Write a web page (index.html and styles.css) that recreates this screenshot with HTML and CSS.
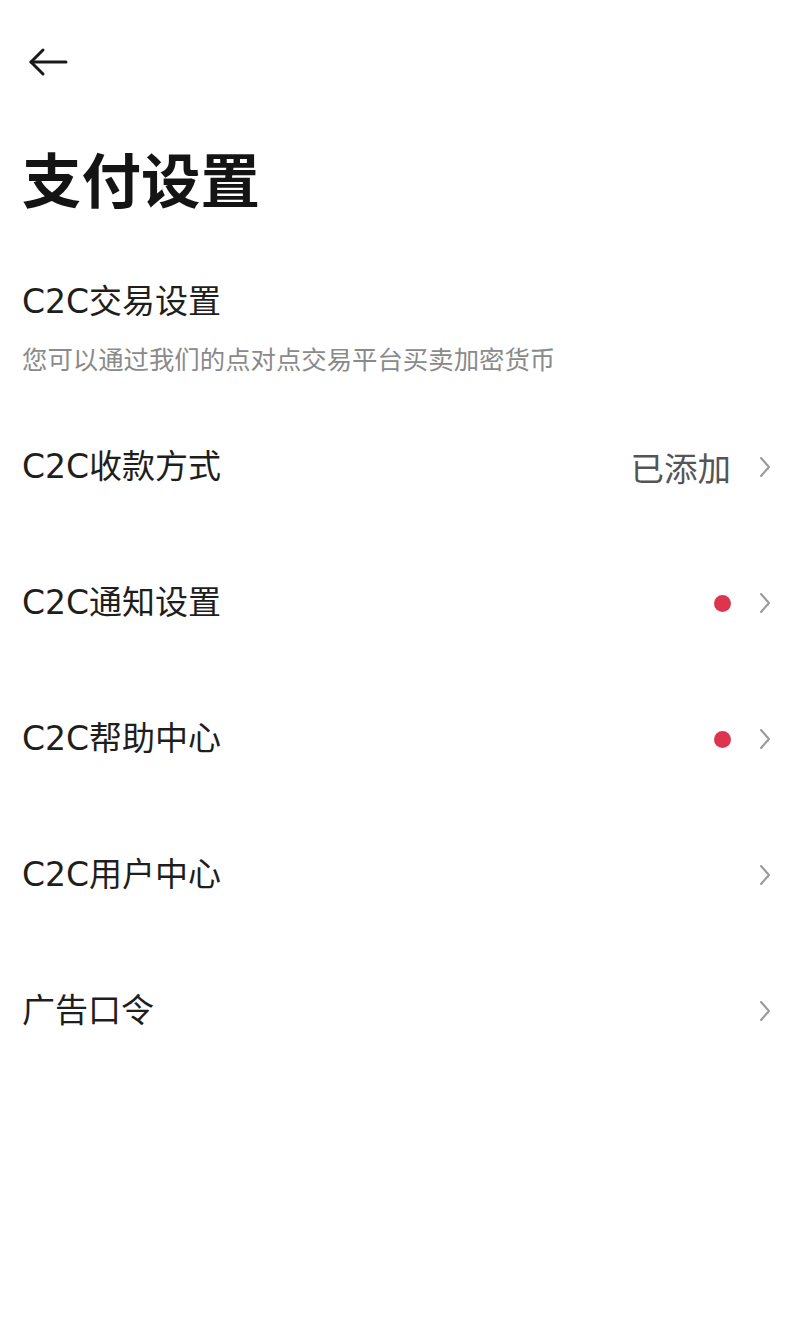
FILE: index.html
```html
<!DOCTYPE html>
<html lang="zh-CN">
<head>
<meta charset="utf-8">
<title>支付设置</title>
<link rel="stylesheet" href="styles.css">
</head>
<body>
<div class="page">
  <header class="topbar">
    <svg class="back" width="40" height="30" viewBox="0 0 40 30" fill="none" stroke="#1a1a1a" stroke-width="3" stroke-linecap="round" stroke-linejoin="round">
      <path d="M38 15 H3"/>
      <path d="M15 3 L3 15 L15 27"/>
    </svg>
  </header>
  <h1 class="title">支付设置</h1>
  <section class="intro">
    <h2 class="intro-title">C2C交易设置</h2>
    <p class="intro-sub">您可以通过我们的点对点交易平台买卖加密货币</p>
  </section>
  <ul class="list">
    <li class="row">
      <span class="label">C2C收款方式</span>
      <span class="right"><span class="value">已添加</span><svg class="chev" width="14" height="22" viewBox="0 0 14 22" fill="none" stroke="#9a9a9a" stroke-width="2" stroke-linecap="round" stroke-linejoin="round"><path d="M3 2 L11 11 L3 20"/></svg></span>
    </li>
    <li class="row">
      <span class="label">C2C通知设置</span>
      <span class="right"><span class="dot"></span><svg class="chev" width="14" height="22" viewBox="0 0 14 22" fill="none" stroke="#9a9a9a" stroke-width="2" stroke-linecap="round" stroke-linejoin="round"><path d="M3 2 L11 11 L3 20"/></svg></span>
    </li>
    <li class="row">
      <span class="label">C2C帮助中心</span>
      <span class="right"><span class="dot"></span><svg class="chev" width="14" height="22" viewBox="0 0 14 22" fill="none" stroke="#9a9a9a" stroke-width="2" stroke-linecap="round" stroke-linejoin="round"><path d="M3 2 L11 11 L3 20"/></svg></span>
    </li>
    <li class="row">
      <span class="label">C2C用户中心</span>
      <span class="right"><svg class="chev" width="14" height="22" viewBox="0 0 14 22" fill="none" stroke="#9a9a9a" stroke-width="2" stroke-linecap="round" stroke-linejoin="round"><path d="M3 2 L11 11 L3 20"/></svg></span>
    </li>
    <li class="row">
      <span class="label">广告口令</span>
      <span class="right"><svg class="chev" width="14" height="22" viewBox="0 0 14 22" fill="none" stroke="#9a9a9a" stroke-width="2" stroke-linecap="round" stroke-linejoin="round"><path d="M3 2 L11 11 L3 20"/></svg></span>
    </li>
  </ul>
</div>
</body>
</html>
```

FILE: styles.css
```css
html, body {
  margin: 0;
  padding: 0;
  background: #ffffff;
}

body {
  font-family: "DejaVu Sans", "Noto Sans CJK SC", sans-serif;
  color: #1a1a1a;
}

.page {
  width: 800px;
  min-height: 1330px;
  box-sizing: border-box;
  padding: 0 28px 0 22px;
}

.topbar {
  height: 124px;
  display: flex;
  align-items: center;
  padding-left: 6px;
}

.back {
  display: block;
}

.title {
  margin: 18px 0 0;
  font-family: "Noto Sans CJK SC", sans-serif;
  font-size: 59.5px;
  line-height: 70px;
  font-weight: 700;
  color: #141414;
}

.intro {
  margin-top: 68px;
}

.intro-title {
  margin: 0;
  font-size: 33px;
  line-height: 44px;
  font-weight: 400;
  color: #1e1e1e;
}

.intro-sub {
  margin: 18px 0 0;
  font-family: "Noto Sans CJK SC", sans-serif;
  font-size: 25.4px;
  line-height: 32px;
  color: #8a8a8a;
}

.list {
  list-style: none;
  margin: 25px 0 0;
  padding: 0;
}

.row {
  height: 136px;
  display: flex;
  align-items: center;
  justify-content: space-between;
}

.label {
  font-size: 33px;
  line-height: 44px;
  color: #1e1e1e;
}

.right {
  display: flex;
  align-items: center;
  gap: 27px;
}

.value {
  font-family: "Noto Sans CJK SC", sans-serif;
  font-size: 33.5px;
  line-height: 44px;
  color: #555;
}

.dot {
  width: 17px;
  height: 17px;
  border-radius: 50%;
  background: #dd3550;
}

.chev {
  display: block;
}
```
